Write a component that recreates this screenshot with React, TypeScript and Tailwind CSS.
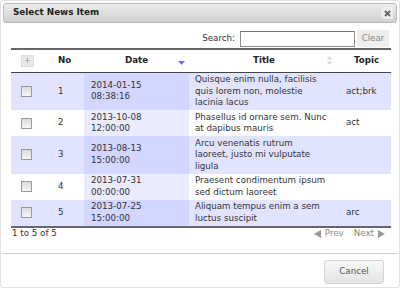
const rows = [
  {
    no: 1,
    date: ["2014-01-15", "08:38:16"],
    title: ["Quisque enim nulla, facilisis", "quis lorem non, molestie", "lacinia lacus"],
    topic: "act;brk",
  },
  {
    no: 2,
    date: ["2013-10-08", "12:00:00"],
    title: ["Phasellus id ornare sem. Nunc", "at dapibus mauris"],
    topic: "act",
  },
  {
    no: 3,
    date: ["2013-08-13", "15:00:00"],
    title: ["Arcu venenatis rutrum", "laoreet, justo mi vulputate", "ligula"],
    topic: "",
  },
  {
    no: 4,
    date: ["2013-07-31", "00:00:00"],
    title: ["Praesent condimentum ipsum", "sed dictum laoreet"],
    topic: "",
  },
  {
    no: 5,
    date: ["2013-07-25", "15:00:00"],
    title: ["Aliquam tempus enim a sem", "luctus suscipit"],
    topic: "arc",
  },
];

function Checkbox() {
  return (
    <div className="h-[11px] w-[11px] border border-[#9a9a9a] bg-gradient-to-b from-[#dcdcdc] to-[#f6f6f6]" />
  );
}

export default function App() {
  return (
    <div
      className="relative h-[288px] w-[400px] overflow-hidden rounded-[3px] border border-[#e2e2e2] bg-white p-[1px] text-[8.7px] text-[#333]"
      style={{ fontFamily: '"DejaVu Sans", Verdana, sans-serif' }}
    >
      {/* title bar */}
      <div className="mx-[1px] mt-[1px] flex h-[20px] items-center justify-between rounded-[3px] border border-[#b9b9b9] bg-gradient-to-b from-[#ececec] to-[#cfcfcf] pl-[9px] pr-[3px]">
        <span className="text-[8.8px] font-bold text-[#222]">Select News Item</span>
        <div className="flex h-[12px] w-[12px] items-center justify-center rounded-[2px] bg-[#ececec]">
          <svg width="7" height="7" viewBox="0 0 7 7">
            <path d="M1 1 L6 6 M6 1 L1 6" stroke="#666" strokeWidth="1.8" />
          </svg>
        </div>
      </div>

      <div className="px-[9px]">
        {/* search */}
        <div className="mt-[7px] flex items-center justify-end gap-[5px]">
          <span className="text-[#333]">Search:</span>
          <div className="h-[16px] w-[115px] border border-[#8c8c8c] border-t-[#777] bg-white" />
          <div className="ml-[-3px] flex h-[17px] w-[32px] items-center justify-center bg-[#eeeeee] text-[#888]">
            Clear
          </div>
        </div>

        {/* table */}
        <table className="mt-[1px] w-[380px] table-fixed border-collapse">
          <colgroup>
            <col className="w-[36px]" />
            <col className="w-[37px]" />
            <col className="w-[105px]" />
            <col className="w-[150px]" />
            <col className="w-[52px]" />
          </colgroup>
          <thead>
            <tr className="h-[23px] border-t-2 border-b border-t-[#666] border-b-[#444] font-bold text-[#222]">
              <th className="p-0">
                <div className="ml-[10px] flex h-[12px] w-[13px] items-center justify-center border border-[#dedede] bg-[#e8e8e8] font-normal text-[#999]">
                  +
                </div>
              </th>
              <th className="p-0 pr-[2px] text-center">No</th>
              <th className="relative p-0 text-center">
                Date
                <svg className="absolute right-[4px] top-[11px]" width="7" height="4" viewBox="0 0 7 4">
                  <path d="M0 0 H7 L3.5 4 Z" fill="#7373d6" />
                </svg>
              </th>
              <th className="relative p-0 text-center">
                Title
                <svg className="absolute right-[7px] top-[6px]" width="5" height="9" viewBox="0 0 5 9">
                  <path d="M0 3.5 L2.5 0 L5 3.5 Z M0 5.5 H5 L2.5 9 Z" fill="#d6d6d6" />
                </svg>
              </th>
              <th className="p-0 pl-[3px] text-center">Topic</th>
            </tr>
          </thead>
          <tbody className="border-b-2 border-b-[#666] leading-[11.5px]">
            {rows.map((r, i) => {
              const odd = i % 2 === 0;
              return (
                <tr key={r.no} className={odd ? "bg-[#e2e4ff]" : "bg-white"}>
                  <td className="py-[1.5px] pl-[10px]">
                    <Checkbox />
                  </td>
                  <td className="py-[1.5px] pl-[11px]">{r.no}</td>
                  <td className={`py-[1.5px] pl-[7px] ${odd ? "bg-[#d3d6ff]" : "bg-[#eaebff]"}`}>
                    {r.date.map((d) => (
                      <div key={d}>{d}</div>
                    ))}
                  </td>
                  <td className="py-[1.5px] pl-[6px]">
                    {r.title.map((t) => (
                      <div key={t} className="whitespace-nowrap">
                        {t}
                      </div>
                    ))}
                  </td>
                  <td className="py-[1.5px] pl-[7px]">{r.topic}</td>
                </tr>
              );
            })}
          </tbody>
        </table>

        {/* footer */}
        <div className="flex h-[13px] items-center justify-between">
          <span className="pl-[1px]">1 to 5 of 5</span>
          <div className="flex items-center gap-[4px] pr-[4px] text-[#888]">
            <svg width="7" height="8" viewBox="0 0 7 8">
              <path d="M7 0 V8 L0 4 Z" fill="#999" />
            </svg>
            <span>Prev</span>
            <span className="ml-[6px]">Next</span>
            <svg width="7" height="8" viewBox="0 0 7 8">
              <path d="M0 0 V8 L7 4 Z" fill="#999" />
            </svg>
          </div>
        </div>
      </div>

      {/* button pane */}
      <div className="mt-[12px] flex justify-end border-t border-[#d4d4d4] pr-[14px] pt-[6px]">
        <div className="flex h-[24px] w-[60px] items-center justify-center rounded-[3px] border border-[#d3d3d3] bg-gradient-to-b from-[#f8f8f8] to-[#e4e4e4] text-[#555]">
          Cancel
        </div>
      </div>
    </div>
  );
}
